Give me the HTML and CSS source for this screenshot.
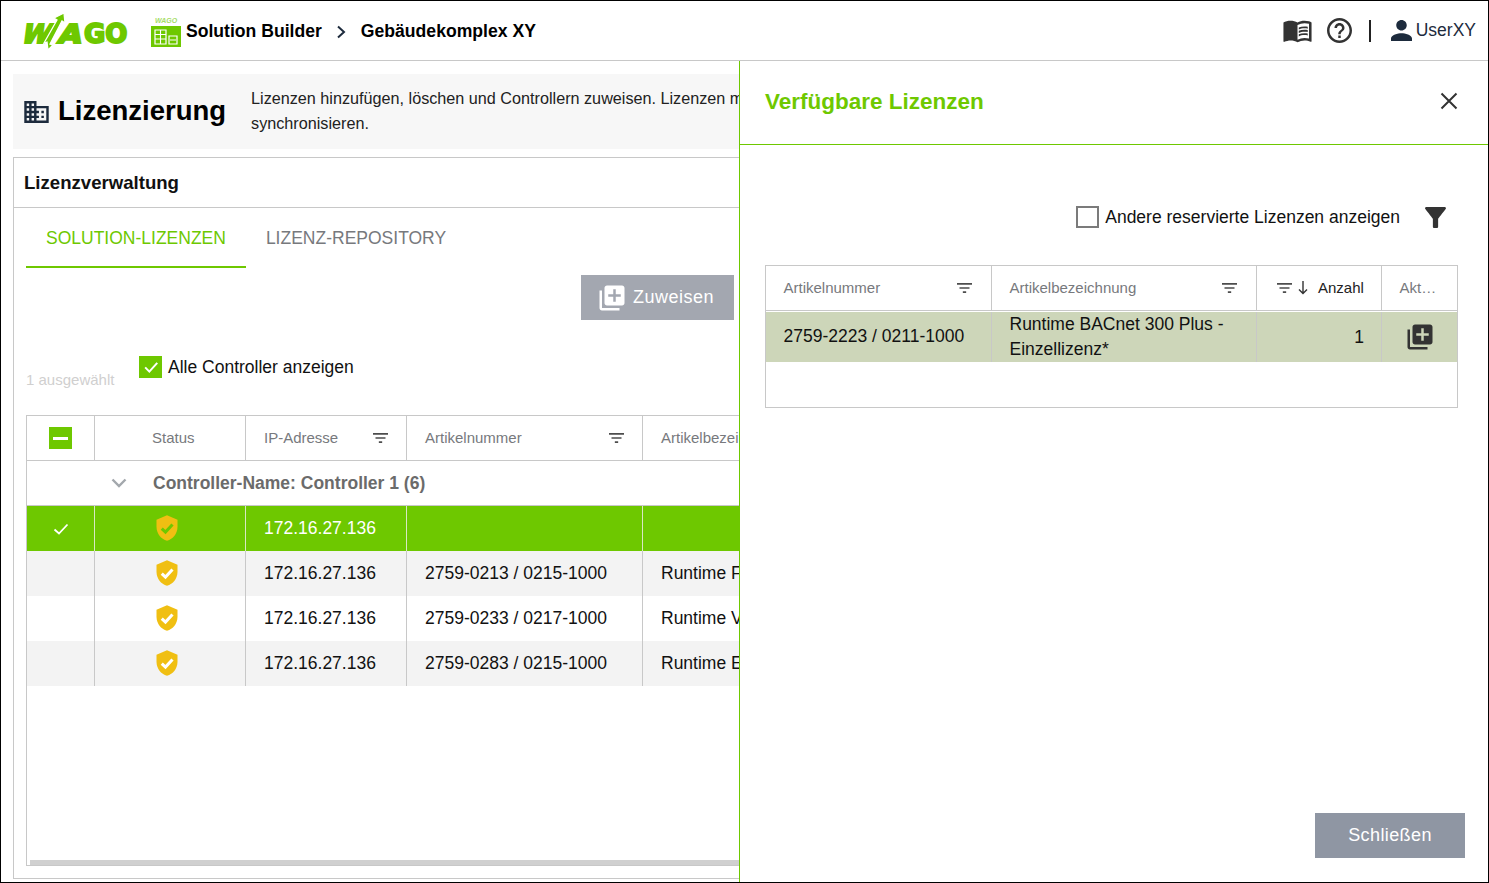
FILE: index.html
```html
<!DOCTYPE html>
<html lang="de">
<head>
<meta charset="utf-8">
<title>Lizenzierung</title>
<link rel="stylesheet" href="styles.css">
</head>
<body>
<svg class="sprite" aria-hidden="true">
  <symbol id="i-filter" viewBox="3 6 18 12"><path d="M10 18h4v-2h-4v2zM3 6v2h18V6H3zm3 7h12v-2H6v2z"/></symbol>
  <symbol id="i-add" viewBox="0 0 24 24"><path d="M4 6H2v14c0 1.1.9 2 2 2h14v-2H4V6zm16-4H8c-1.1 0-2 .9-2 2v12c0 1.1.9 2 2 2h12c1.1 0 2-.9 2-2V4c0-1.1-.9-2-2-2zm-1 9h-4v4h-2v-4H9V9h4V5h2v4h4v2z"/></symbol>
  <symbol id="i-shield" viewBox="0 0 24 24"><path d="M12 1L3 5v6c0 5.55 3.84 10.74 9 12 5.16-1.26 9-6.45 9-12V5l-9-4z"/></symbol>
</svg>
<div class="app">
  <header class="topbar">
    <svg class="logo" viewBox="0 0 106 38" role="img" aria-label="WAGO">
      <text class="logo-wa" transform="translate(-2 31) skewX(-20) scale(1 1)">W</text>
      <text class="logo-wa" transform="translate(35 31) skewX(-14) scale(1.15 1)">A</text>
      <text x="62" y="31" class="logo-go">GO</text>
      <path d="M26 38l-1-8-3 1 13-23-3-2 10-5 1 10-3-2-12 23 3 1z" fill="#6ec800" stroke="#fff" stroke-width="1.3"/>
    </svg>
    <div class="appicon">
      <span class="appicon-tag">wago</span>
      <svg class="appicon-box" viewBox="0 0 30 21"><rect width="30" height="21" fill="#6ec800"/><path d="M4 4h11v14H4zM18 10h8v8h-8z" fill="none" stroke="#fff" stroke-width="1.2"/><path d="M4 8.5h11M4 13h11M9.5 4v14M19 14h6" stroke="#fff" stroke-width="1.1"/></svg>
    </div>
    <span class="crumb">Solution Builder</span>
    <svg class="crumb-sep" viewBox="0 0 10 14"><path d="M2 1.5L8 7l-6 5.5" fill="none" stroke="#1d2b3d" stroke-width="2"/></svg>
    <span class="crumb">Gebäudekomplex XY</span>
    <div class="top-right">
      <svg class="top-book" viewBox="1 4 22 18"><path fill="#333" d="M21 5c-1.11-.35-2.33-.5-3.5-.5-1.95 0-4.05.4-5.5 1.5-1.45-1.1-3.55-1.5-5.5-1.5S2.45 4.9 1 6v14.65c0 .25.25.5.5.5.1 0 .15-.05.25-.05C3.1 20.45 5.05 20 6.5 20c1.95 0 4.05.4 5.5 1.5 1.35-.85 3.8-1.5 5.5-1.5 1.65 0 3.35.3 4.75 1.05.1.05.15.05.25.05.25 0 .5-.25.5-.5V6c-.6-.45-1.25-.75-2-1zm0 13.5c-1.1-.35-2.3-.5-3.5-.5-1.7 0-4.15.65-5.5 1.5V8c1.35-.85 3.8-1.5 5.5-1.5 1.2 0 2.4.15 3.5.5v11.5z"/><path fill="#333" d="M17.5 10.5c.88 0 1.73.09 2.5.26V9.24c-.79-.15-1.64-.24-2.5-.24-1.7 0-3.24.29-4.5.83v1.66c1.13-.64 2.7-.99 4.5-.99zM13 12.49v1.66c1.13-.64 2.7-.99 4.5-.99.88 0 1.73.09 2.5.26V11.9c-.79-.15-1.64-.24-2.5-.24-1.7 0-3.24.3-4.5.83zM17.5 14.33c-1.7 0-3.24.29-4.5.83v1.66c1.13-.64 2.7-.99 4.5-.99.88 0 1.73.09 2.5.26v-1.52c-.79-.16-1.64-.24-2.5-.24z"/></svg>
      <svg class="top-help" viewBox="2 2 20 20"><path fill="#333" d="M11 18h2v-2h-2v2zm1-16C6.48 2 2 6.48 2 12s4.48 10 10 10 10-4.48 10-10S17.52 2 12 2zm0 18c-4.41 0-8-3.59-8-8s3.59-8 8-8 8 3.59 8 8-3.59 8-8 8zm0-14c-2.21 0-4 1.79-4 4h2c0-1.1.9-2 2-2s2 .9 2 2c0 2-3 1.75-3 5h2c0-2.25 3-2.5 3-5 0-2.21-1.79-4-4-4z"/></svg>
      <span class="top-divider"></span>
      <svg class="top-user" viewBox="4 4 16 16"><path fill="#1d2b3d" d="M12 12c2.21 0 4-1.79 4-4s-1.79-4-4-4-4 1.79-4 4 1.79 4 4 4zm0 2c-2.67 0-8 1.34-8 4v2h16v-2c0-2.66-5.33-4-8-4z"/></svg>
      <span class="username">UserXY</span>
    </div>
  </header>

  <div class="body">
    <main class="main">
      <section class="intro">
        <svg class="intro-icon" viewBox="2 3 20 18"><path fill="#1d2b3d" d="M12 7V3H2v18h20V7H12zM6 19H4v-2h2v2zm0-4H4v-2h2v2zm0-4H4V9h2v2zm0-4H4V5h2v2zm4 12H8v-2h2v2zm0-4H8v-2h2v2zm0-4H8V9h2v2zm0-4H8V5h2v2zm10 12h-8v-2h2v-2h-2v-2h2v-2h-2V9h8v10zm-2-8h-2v2h2v-2zm0 4h-2v2h2v-2z"/></svg>
        <h1 class="intro-title">Lizenzierung</h1>
        <p class="intro-text">Lizenzen hinzufügen, löschen und Controllern zuweisen. Lizenzen m<br>synchronisieren.</p>
      </section>

      <section class="card">
        <h2 class="card-title">Lizenzverwaltung</h2>
        <nav class="tabs">
          <span class="tab tab-active">SOLUTION-LIZENZEN</span>
          <span class="tab">LIZENZ-REPOSITORY</span>
        </nav>
        <div class="assign-row">
          <button class="btn-assign"><svg class="btn-assign-icon"><use href="#i-add"/></svg>Zuweisen</button>
        </div>
        <div class="select-row">
          <span class="selected-count">1 ausgewählt</span>
          <label class="check-label">
            <span class="check check-on"><svg viewBox="0 0 24 24"><path d="M5 12.5l5 5L19.5 7" fill="none" stroke="#fff" stroke-width="2.4"/></svg></span>
            Alle Controller anzeigen
          </label>
        </div>

        <div class="grid">
          <div class="g-row g-head">
            <div class="g-cell g-center"><span class="check check-on check-head"><span class="minus"></span></span></div>
            <div class="g-cell g-status">Status</div>
            <div class="g-cell">IP-Adresse<svg class="f-icon"><use href="#i-filter"/></svg></div>
            <div class="g-cell">Artikelnummer<svg class="f-icon"><use href="#i-filter"/></svg></div>
            <div class="g-cell g-last">Artikelbezei</div>
          </div>
          <div class="g-group">
            <svg class="chev" viewBox="0 0 16 10"><path d="M1.5 1.5L8 8l6.5-6.5" fill="none" stroke="#a3a8ad" stroke-width="2.4"/></svg>
            <span>Controller-Name: Controller 1 (6)</span>
          </div>
          <div class="g-row g-body g-selected">
            <div class="g-cell g-center"><svg class="row-check" viewBox="0 0 16 12"><path d="M1.5 6.5l4.5 4L14.5 1.5" fill="none" stroke="#fff" stroke-width="1.8"/></svg></div>
            <div class="g-cell g-center g-shield"><span class="shield"><svg><use href="#i-shield"/></svg><svg class="shield-check on-green" viewBox="0 0 24 24"><path d="M7.5 12.5l3.2 3 6-6.5" fill="none" stroke-width="2.6"/></svg></span></div>
            <div class="g-cell">172.16.27.136</div>
            <div class="g-cell"></div>
            <div class="g-cell g-last"></div>
          </div>
          <div class="g-row g-body g-alt">
            <div class="g-cell"></div>
            <div class="g-cell g-center g-shield"><span class="shield"><svg><use href="#i-shield"/></svg><svg class="shield-check" viewBox="0 0 24 24"><path d="M7.5 12.5l3.2 3 6-6.5" fill="none" stroke-width="2.6"/></svg></span></div>
            <div class="g-cell">172.16.27.136</div>
            <div class="g-cell">2759-0213 / 0215-1000</div>
            <div class="g-cell g-last">Runtime F</div>
          </div>
          <div class="g-row g-body">
            <div class="g-cell"></div>
            <div class="g-cell g-center g-shield"><span class="shield"><svg><use href="#i-shield"/></svg><svg class="shield-check" viewBox="0 0 24 24"><path d="M7.5 12.5l3.2 3 6-6.5" fill="none" stroke-width="2.6"/></svg></span></div>
            <div class="g-cell">172.16.27.136</div>
            <div class="g-cell">2759-0233 / 0217-1000</div>
            <div class="g-cell g-last">Runtime V</div>
          </div>
          <div class="g-row g-body g-alt">
            <div class="g-cell"></div>
            <div class="g-cell g-center g-shield"><span class="shield"><svg><use href="#i-shield"/></svg><svg class="shield-check" viewBox="0 0 24 24"><path d="M7.5 12.5l3.2 3 6-6.5" fill="none" stroke-width="2.6"/></svg></span></div>
            <div class="g-cell">172.16.27.136</div>
            <div class="g-cell">2759-0283 / 0215-1000</div>
            <div class="g-cell g-last">Runtime E</div>
          </div>
          <div class="g-fill"></div>
          <div class="g-scroll"></div>
        </div>
      </section>
    </main>

    <aside class="drawer">
      <div class="drawer-head">
        <h2 class="drawer-title">Verfügbare Lizenzen</h2>
        <svg class="drawer-close" viewBox="0 0 18 18"><path d="M1.5 1.5l15 15M16.5 1.5l-15 15" fill="none" stroke="#333" stroke-width="2"/></svg>
      </div>
      <div class="drawer-body">
        <div class="drawer-tools">
          <label class="check-label check-label-drawer"><span class="check check-off"></span>Andere reservierte Lizenzen anzeigen</label>
          <svg class="funnel" viewBox="4 4 16 16"><path fill="#333" d="M4.25 5.61C6.27 8.2 10 13 10 13v6c0 .55.45 1 1 1h2c.55 0 1-.45 1-1v-6s3.72-4.8 5.74-7.39c.51-.66.04-1.61-.79-1.61H5.04c-.83 0-1.3.95-.79 1.61z"/></svg>
        </div>
        <div class="lic">
          <div class="lic-row lic-head">
            <div class="lic-cell">Artikelnummer<svg class="f-icon"><use href="#i-filter"/></svg></div>
            <div class="lic-cell">Artikelbezeichnung<svg class="f-icon"><use href="#i-filter"/></svg></div>
            <div class="lic-cell lic-count"><svg class="f-icon f-icon-lead"><use href="#i-filter"/></svg><svg class="sort" viewBox="0 0 10 14"><path d="M5 0v12M1 8.5l4 4 4-4" fill="none" stroke="#333" stroke-width="1.4"/></svg><span class="lic-count-label">Anzahl</span></div>
            <div class="lic-cell">Akt…</div>
          </div>
          <div class="lic-row lic-data">
            <div class="lic-cell lic-nr">2759-2223 / 0211-1000</div>
            <div class="lic-cell lic-name">Runtime BACnet 300 Plus - Einzellizenz*</div>
            <div class="lic-cell lic-num">1</div>
            <div class="lic-cell"><svg class="lic-add"><use href="#i-add"/></svg></div>
          </div>
        </div>
      </div>
      <div class="drawer-foot">
        <button class="btn-close">Schließen</button>
      </div>
    </aside>
  </div>
</div>
</body>
</html>
```

FILE: styles.css
```css
* { box-sizing: border-box; }
html, body { margin: 0; height: 100%; }
body { font-family: "Liberation Sans", Arial, sans-serif; color: #111; background: #fff; overflow: hidden; }
.sprite { display: none; }
svg { display: block; flex: none; }

.app { width: 1489px; height: 883px; border: 1px solid #000; display: flex; flex-direction: column; overflow: hidden; }

/* top bar */
.topbar { height: 60px; flex: none; display: flex; align-items: center; border-bottom: 1px solid #c8c8c8; padding: 0 12px 0 21px; }
.logo { width: 106px; height: 38px; margin-right: 23px; overflow: visible; }
.logo-wa { font: 700 26px "DejaVu Sans", sans-serif; fill: #6ec800; stroke: #6ec800; stroke-width: 2.2px; }
.logo-go { font: 700 26px "DejaVu Sans", sans-serif; fill: #6ec800; stroke: #6ec800; stroke-width: 2px; }
.appicon { width: 30px; margin-top: 2px; margin-right: 5px; display: flex; flex-direction: column; align-items: center; }
.appicon-tag { font: italic 700 7px/8px "Liberation Sans", sans-serif; color: #a5dc66; text-transform: uppercase; }
.appicon-box { width: 30px; height: 21px; margin-top: 1px; }
.crumb { font-size: 17.6px; font-weight: 700; color: #000; margin-top: 2px; }
.crumb-sep { width: 10px; height: 14px; margin: 2px 15px 0 14px; }
.top-right { margin-left: auto; display: flex; align-items: center; }
.top-book { width: 29px; height: 23px; margin-right: 15px; margin-top: 2px; }
.top-help { width: 25px; height: 25px; }
.top-divider { width: 2px; height: 22px; background: #222; margin: 0 20px 0 17px; }
.top-user { width: 21px; height: 21px; margin-right: 4px; }
.username { font-size: 17.5px; color: #1d2b3d; }

.body { flex: 1; min-height: 0; position: relative; }

/* main */
.main { width: 746px; height: 100%; padding: 13px 0 3px 12px; display: flex; flex-direction: column; }
.intro { height: 75px; flex: none; background: #f7f7f7; display: flex; align-items: center; padding: 0 0 2px 11px; margin-bottom: 8px; overflow: hidden; }
.intro-icon { width: 25px; height: 22px; margin-top: 2px; margin-right: 9px; }
.intro-title { font-size: 27.5px; font-weight: 700; margin: 0 25px 0 0; color: #000; white-space: nowrap; }
.intro-text { font-size: 16.2px; line-height: 25px; margin: 0; white-space: nowrap; color: #222; }

.card { flex: 1; min-height: 0; border: 1px solid #c8c8c8; display: flex; flex-direction: column; padding: 0 12px 12px; }
.card-title { font-size: 18.6px; font-weight: 700; margin: 0 -12px; height: 50px; line-height: 49px; padding-left: 10px; border-bottom: 1px solid #c8c8c8; color: #111; flex: none; }
.tabs { display: flex; height: 60px; flex: none; }
.tab { padding: 0 20px; line-height: 60px; font-size: 17.5px; color: #77797d; height: 60px; }
.tab-active { color: #6ec800; border-bottom: 2px solid #6ec800; }

.assign-row { display: flex; justify-content: flex-end; padding-top: 7px; flex: none; }
.btn-assign { width: 153px; height: 45px; border: 0; background: #a3a7b0; color: #fff; font: 18px "Liberation Sans", sans-serif; letter-spacing: .5px; display: flex; align-items: center; padding: 0 0 0 16px; }
.btn-assign-icon { width: 30px; height: 30px; fill: #fff; margin-right: 6px; }
.select-row { height: 95px; flex: none; display: flex; align-items: flex-start; padding-top: 36px; }
.selected-count { font-size: 15px; color: #d0cfcf; margin-top: 15px; width: 113px; }
.check-label { display: flex; align-items: center; font-size: 17.5px; color: #111; }
.check { display: flex; align-items: center; justify-content: center; width: 23px; height: 22px; flex: none; }
.check-on { background: #6ec800; margin-right: 6px; }
.check-on svg { width: 20px; height: 20px; }
.check-head { margin: 0; }
.minus { width: 15px; height: 3px; background: #fff; }
.check-off { border: 2px solid #7b7b7b; margin-right: 6px; }

/* grid */
.grid { flex: 1; min-height: 0; border: 1px solid #c8c8c8; border-right: 0; display: flex; flex-direction: column; margin-right: -12px; overflow: hidden; }
.g-row { display: grid; grid-template-columns: 68px 151px 161px 236px 1fr; flex: none; }
.g-head { height: 45px; border-bottom: 1px solid #c8c8c8; color: #77797d; font-size: 15px; }
.g-cell { border-right: 1px solid #c8c8c8; display: flex; align-items: center; padding: 0 18px; justify-content: space-between; white-space: nowrap; overflow: hidden; }
.g-head .g-cell { padding-bottom: 1px; }
.g-head .g-center { padding: 0; }
.g-head .g-status { padding-left: 57px; }
.g-last { border-right: 0; }
.g-center { justify-content: center; padding: 0; }
.g-shield { padding: 0 6px 2px 0; }
.g-status { justify-content: flex-start; }
.f-icon { width: 15px; height: 10px; fill: #4d4d4d; }
.g-group { height: 45px; flex: none; display: flex; align-items: center; border-bottom: 1px solid #c8c8c8; font-size: 17.5px; font-weight: 700; color: #6b6b6b; padding-left: 84px; }
.chev { width: 16px; height: 10px; margin-right: 26px; }
.g-body { height: 45px; font-size: 17.5px; color: #111; }
.g-alt { background: #f3f3f3; }
.g-selected { background: #6ec800; color: #fff; }
.g-selected .g-cell { border-right-color: #d9e8c2; }
.row-check { width: 16px; height: 12px; }
.shield { position: relative; width: 28px; height: 28px; display: block; }
.shield svg { width: 28px; height: 28px; fill: #f0bf12; }
.shield .shield-check { position: absolute; inset: 0; stroke: #fff; fill: none; }
.shield .shield-check.on-green { stroke: #6ec800; }
.g-fill { flex: 1; min-height: 0; }
.g-scroll { height: 5px; flex: none; background: #d0d0d0; margin-left: 3px; }

/* drawer */
.drawer { position: absolute; top: 0; right: 0; bottom: 0; width: 749px; background: #fff; border-left: 1px solid #6ec800; display: flex; flex-direction: column; }
.drawer-head { height: 84px; flex: none; display: flex; align-items: center; justify-content: space-between; border-bottom: 1px solid #6ec800; padding: 0 30px 1px 25px; }
.drawer-title { font-size: 22.5px; font-weight: 700; color: #6ec800; margin: 0; }
.drawer-close { width: 18px; height: 18px; margin-bottom: 2px; }
.drawer-body { flex: 1; padding: 0 30px 0 25px; }
.drawer-tools { height: 120px; display: flex; align-items: center; justify-content: flex-end; padding: 24px 12px 0 0; }
.check-label-drawer { margin-right: 25px; }
.funnel { width: 21px; height: 21px; }
.lic { border: 1px solid #c8c8c8; height: 143px; }
.lic-row { display: grid; grid-template-columns: 226px 265px 125px 1fr; }
.lic-head { height: 45px; margin-bottom: 1px; font-size: 15px; color: #77797d; border-bottom: 1px solid #c8c8c8; }
.lic-cell { display: flex; align-items: center; justify-content: space-between; padding: 0 18px 0 17.5px; border-right: 1px solid #c8c8c8; white-space: nowrap; }
.lic-head .lic-cell { padding-right: 19px; padding-bottom: 1px; }
.lic-cell:last-child { border-right: 0; }
.lic-head .lic-count { justify-content: flex-start; padding-left: 20px; padding-right: 0; }
.f-icon-lead { margin-right: 6px; }
.sort { width: 10px; height: 14px; margin-right: 10px; }
.lic-count-label { color: #222; }
.lic-data { height: 50px; background: #cdd6b9; font-size: 17.5px; color: #111; }
.lic-nr { padding-bottom: 1px; }
.lic-name { white-space: normal; line-height: 25px; padding-right: 20px; }
.lic-num { justify-content: flex-end; padding-right: 17px; }
.lic-add { width: 30px; height: 30px; fill: #333; margin-left: 5px; }
.drawer-foot { flex: none; display: flex; justify-content: flex-end; padding: 0 23px 24px 0; }
.btn-close { width: 150px; height: 45px; border: 0; background: #8f96a3; color: #fff; font: 18px "Liberation Sans", sans-serif; letter-spacing: .4px; }
```
